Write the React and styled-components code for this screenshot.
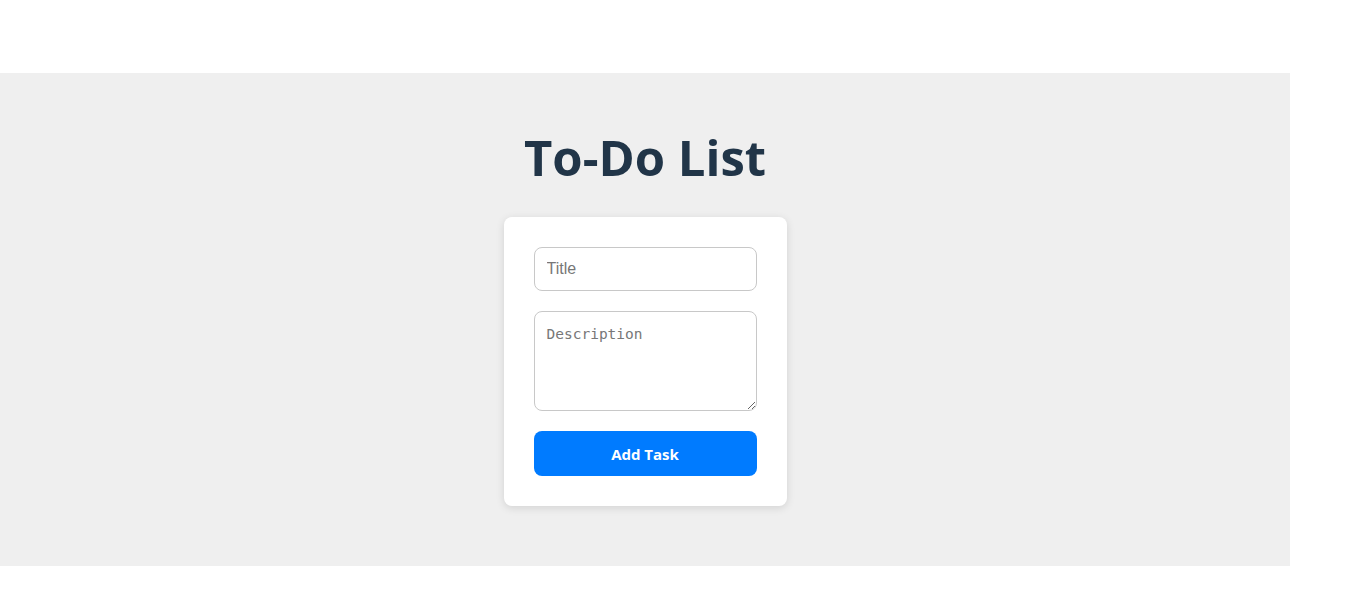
import React from 'react'
import styled, { createGlobalStyle } from 'styled-components'

const GlobalStyle = createGlobalStyle`
  body {
    margin: 0;
    background: #ffffff;
    font-family: "Open Sans", "Noto Sans", sans-serif;
  }
`

const Page = styled.div`
  padding-top: 73px;
  width: 1290px;
`

const Section = styled.section`
  background: #efefef;
  height: 493px;
  box-sizing: border-box;
  padding-top: 55px;
  display: flex;
  flex-direction: column;
  align-items: center;
`

const Title = styled.h1`
  margin: 0 0 31px;
  font-family: "Open Sans", "Noto Sans", sans-serif;
  font-size: 49px;
  line-height: 58px;
  font-weight: 700;
  color: #213548;
`

const Card = styled.form`
  width: 283px;
  box-sizing: border-box;
  padding: 30px;
  background: #ffffff;
  border-radius: 8px;
  box-shadow: 0 2px 8px rgba(0, 0, 0, 0.12);
  display: flex;
  flex-direction: column;
  gap: 20px;
`

const Field = styled.input`
  height: 44px;
  box-sizing: border-box;
  padding: 0 12px;
  border: 1px solid #c8c8c8;
  border-radius: 8px;
  font-family: "Liberation Sans", Arial, sans-serif;
  font-size: 16px;
  color: #333;
  outline: none;
  &::placeholder { color: #777; }
`

const Area = styled.textarea`
  height: 100px;
  box-sizing: border-box;
  padding: 14px 12px 12px;
  border: 1px solid #c8c8c8;
  border-radius: 8px;
  font-family: "DejaVu Sans Mono", monospace;
  font-size: 14.5px;
  color: #333;
  outline: none;
  resize: vertical;
  &::placeholder { color: #777; }
`

const Button = styled.button`
  height: 45px;
  border: none;
  border-radius: 8px;
  background: #007bff;
  color: #ffffff;
  font-family: "Open Sans", "Noto Sans", sans-serif;
  font-size: 15px;
  font-weight: 700;
  cursor: pointer;
`

export default function App() {
  return (
    <>
      <GlobalStyle />
      <Page>
        <Section>
          <Title>To-Do List</Title>
          <Card onSubmit={e => e.preventDefault()}>
            <Field type="text" placeholder="Title" />
            <Area placeholder="Description" />
            <Button type="submit">Add Task</Button>
          </Card>
        </Section>
      </Page>
    </>
  )
}
